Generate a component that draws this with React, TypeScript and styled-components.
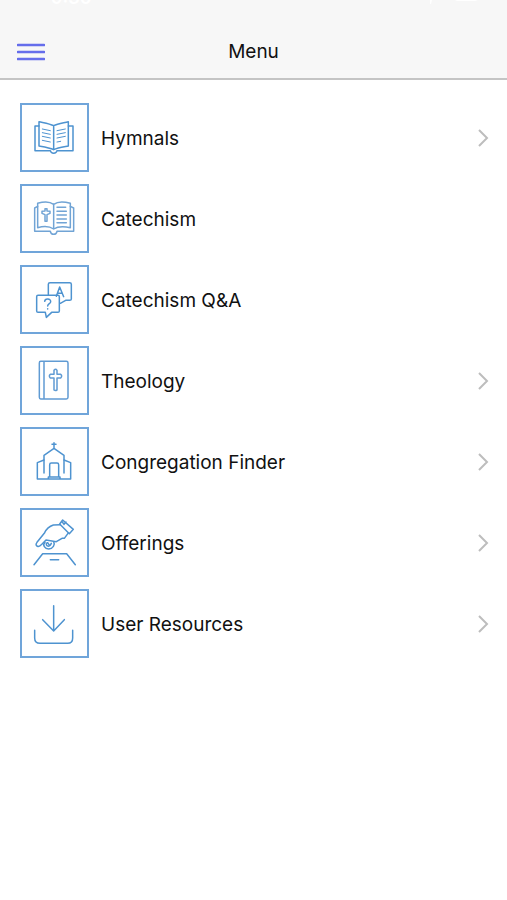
import React from "react";
import styled, { createGlobalStyle } from "styled-components";

const GlobalStyle = createGlobalStyle`
  * {
    box-sizing: border-box;
  }
  body {
    margin: 0;
    background: #ffffff;
    color: #111111;
    font-family: Inter, "Liberation Sans", sans-serif;
  }
`;

const Header = styled.header`
  background: #f7f7f7;
  border-bottom: 2px solid #c4c4c4;
`;

const StatusBar = styled.div`
  display: flex;
  justify-content: space-between;
  align-items: flex-end;
  height: 8px;
  padding: 0 28px 0 51px;
  overflow: hidden;
  color: #ffffff;
  font-size: 18px;
  line-height: 20px;
  font-weight: 600;
`;

const NavBar = styled.div`
  display: grid;
  grid-template-columns: 62px 1fr 62px;
  align-items: center;
  height: 70px;
  padding: 18px 0 0;
`;

const MenuButton = styled.button`
  display: flex;
  justify-content: center;
  align-items: center;
  height: 44px;
  padding: 0;
  border: 0;
  background: none;
  color: #656deb;
  cursor: pointer;
`;

const Title = styled.h1`
  margin: 0;
  text-align: center;
  font-size: 19px;
  line-height: 24px;
  font-weight: 400;
`;

const List = styled.ul`
  display: flex;
  flex-direction: column;
  gap: 12px;
  margin: 0;
  padding: 23px 16px 23px 20px;
  list-style: none;
`;

const Row = styled.a`
  display: flex;
  align-items: center;
  gap: 12px;
  color: inherit;
  text-decoration: none;
`;

const IconTile = styled.span`
  flex: none;
  width: 69px;
  height: 69px;
  border: 2px solid #70a5da;

  svg {
    display: block;
    width: 100%;
    height: 100%;
    fill: none;
    stroke: #4e93d0;
    stroke-width: 4.5;
    stroke-linecap: round;
    stroke-linejoin: round;
  }
`;

const Label = styled.span`
  flex: 1;
  padding-top: 2px;
  font-size: 19px;
  line-height: 24px;
`;

const Chevron = styled.svg`
  flex: none;
  width: 16px;
  height: 20px;
  fill: none;
  stroke: #bdbdbd;
  stroke-width: 2;
`;

const HymnalIcon = (
  <>
    <path d="M117 84C105 78 91 76 73 72V145C91 148 105 150 117 156C129 150 145 148 161 145V72C145 76 129 78 117 84ZM117 84V156" />
    <path d="M73 85H61V159H107C109 169 125 169 127 159H175V85H161" />
    <path d="M83 94L107 99M83 105L107 110M83 116L107 121M83 128L107 133M127 99L152 94M127 110L152 105M127 121L152 116M127 133L138 131" strokeWidth="3" />
  </>
);

const CatechismIcon = (
  <g stroke="#71a4d5">
    <path d="M117 77C105 68 88 68 69 74V147C88 142 105 143 117 151C129 143 146 142 167 147V74C147 68 129 68 117 77ZM117 77V151" />
    <path d="M69 83L60 88V158H107C109 170 125 170 127 158H177V88L167 83" />
    <path d="M91 128V108L82 104V98L91 97V90H97V97L106 98V104L97 108V128ZM127 86H153M127 98H155M127 109H155M127 121H155M127 132H155" />
  </g>
);

const QuestionIcon = (
  <>
    <path d="M101 105V74Q101 69 106 69H165Q170 69 170 74V118Q170 122 165 122H153L137 131" />
    <path d="M70 107H130Q134 107 134 111V154Q134 158 130 158H111L95 173L92 158H70Q66 158 66 154V111Q66 107 70 107Z" />
    <path d="M90 125C91 115 109 116 108 126C108 132 99 132 99 139M99 147V148M125 110L135 82L147 111M129 101H143" />
  </>
);

const TheologyIcon = (
  <g stroke="#609bd3">
    <path d="M78 62H155Q160 62 160 67V170Q160 175 155 175H78Q74 175 74 170V67Q74 62 78 62ZM88 63V174" />
    <path d="M118 148V112H107Q101 106 107 101H118V89Q123 83 127 89V101H138Q144 106 138 112H127V148Q122 151 118 148Z" />
  </g>
);

const ChurchIcon = (
  <>
    <path d="M118 63V81M112 68H124M88 154V101L118 80L148 101V154" />
    <path d="M88 115L68 123V172H168V123L148 115M105 165V129Q105 124 110 124H127Q132 124 132 129V165M101 172V166H136V172" />
  </>
);

const OfferingIcon = (
  <>
    <path d="M58 186L84 153H156L182 186M107 171H132" />
    <path d="M137 66L116 67Q98 73 90 90L67 119Q61 127 68 131Q75 133 80 126L94 112L125 117L142 107H149L160 92" />
    <path d="M135 64L144 52L176 80L164 93ZM148 65L143 58M148 65L154 58" />
    <path d="M91 119C82 127 91 139 102 139C115 138 122 126 117 117M96 121C91 130 105 136 110 122M99 120L105 129" />
  </>
);

const DownloadIcon = (
  <>
    <path d="M117 66V141M84 108L117 142L149 108" />
    <path d="M60 140V163Q60 179 76 179H159Q174 179 174 163V140" />
  </>
);

interface MenuItem {
  label: string;
  icon: React.ReactNode;
  hasChildren: boolean;
}

const items: MenuItem[] = [
  { label: "Hymnals", icon: HymnalIcon, hasChildren: true },
  { label: "Catechism", icon: CatechismIcon, hasChildren: false },
  { label: "Catechism Q&A", icon: QuestionIcon, hasChildren: false },
  { label: "Theology", icon: TheologyIcon, hasChildren: true },
  { label: "Congregation Finder", icon: ChurchIcon, hasChildren: true },
  { label: "Offerings", icon: OfferingIcon, hasChildren: true },
  { label: "User Resources", icon: DownloadIcon, hasChildren: true },
];

export default function App() {
  return (
    <>
      <GlobalStyle />
      <Header>
        <StatusBar>
          <span>9:30</span>
          <svg width="52" height="8" aria-hidden="true">
            <path d="M3 0H5L4 4H3ZM28 0H51L48 1H30Z" fill="#ffffff" />
          </svg>
        </StatusBar>
        <NavBar>
          <MenuButton type="button" aria-label="Open menu">
            <svg width="28" height="20" viewBox="0 0 28 20" aria-hidden="true">
              <path
                d="M1 3H27M1 10H27M1 17H27"
                stroke="currentColor"
                strokeWidth="2.6"
                strokeLinecap="round"
              />
            </svg>
          </MenuButton>
          <Title>Menu</Title>
        </NavBar>
      </Header>
      <main>
        <List>
          {items.map((item) => (
            <li key={item.label}>
              <Row href="#">
                <IconTile>
                  <svg viewBox="22 22 195 195" aria-hidden="true">
                    {item.icon}
                  </svg>
                </IconTile>
                <Label>{item.label}</Label>
                {item.hasChildren && (
                  <Chevron viewBox="0 0 16 20" aria-hidden="true">
                    <path d="M4 2L12 10L4 18" />
                  </Chevron>
                )}
              </Row>
            </li>
          ))}
        </List>
      </main>
    </>
  );
}
